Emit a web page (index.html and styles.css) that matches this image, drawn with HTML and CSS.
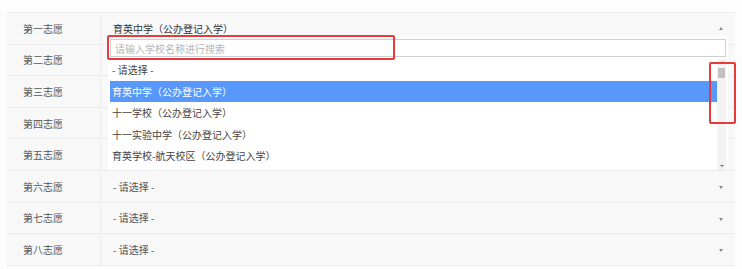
FILE: index.html
```html
<!DOCTYPE html>
<html lang="zh-CN">
<head>
    <meta charset="UTF-8">
    <title>志愿填报</title>
    <link rel="stylesheet" href="styles.css">
</head>
<body>
<div class="page">
    <div class="wishForm">
        <div class="wishRow">
            <div class="wishLabel">第一志愿</div>
            <div class="wishValue open">
                <span class="selected">育英中学（公办登记入学）</span>
                <span class="arrow up"></span>
                <div class="dropdown">
                    <div class="searchWrap">
                        <input type="text" class="searchField" placeholder="请输入学校名称进行搜索">
                    </div>
                    <div class="listWrap">
                        <ul class="options">
                            <li>- 请选择 -</li>
                            <li class="highlighted">育英中学（公办登记入学）</li>
                            <li>十一学校（公办登记入学）</li>
                            <li>十一实验中学（公办登记入学）</li>
                            <li>育英学校-航天校区（公办登记入学）</li>
                        </ul>
                        <div class="scrollbar">
                            <span class="scrollUp"></span>
                            <span class="thumb"></span>
                            <span class="scrollDown"></span>
                        </div>
                    </div>
                </div>
            </div>
        </div>
        <div class="wishRow">
            <div class="wishLabel">第二志愿</div>
            <div class="wishValue"></div>
        </div>
        <div class="wishRow">
            <div class="wishLabel">第三志愿</div>
            <div class="wishValue"></div>
        </div>
        <div class="wishRow">
            <div class="wishLabel">第四志愿</div>
            <div class="wishValue"></div>
        </div>
        <div class="wishRow">
            <div class="wishLabel">第五志愿</div>
            <div class="wishValue"></div>
        </div>
        <div class="wishRow">
            <div class="wishLabel">第六志愿</div>
            <div class="wishValue">
                <span class="selected muted">- 请选择 -</span>
                <span class="arrow"></span>
            </div>
        </div>
        <div class="wishRow">
            <div class="wishLabel">第七志愿</div>
            <div class="wishValue">
                <span class="selected muted">- 请选择 -</span>
                <span class="arrow"></span>
            </div>
        </div>
        <div class="wishRow">
            <div class="wishLabel">第八志愿</div>
            <div class="wishValue">
                <span class="selected muted">- 请选择 -</span>
                <span class="arrow"></span>
            </div>
        </div>
    </div>

    <!-- red marks drawn over the screenshot -->
    <div class="mark markSearch"></div>
    <div class="mark markScroll"></div>
</div>
</body>
</html>
```

FILE: styles.css
```css
body {
    margin: 0;
    padding: 0;
    background-color: #FDFDFD;
    font-family: "Noto Sans CJK SC", "Noto Sans", sans-serif;
    font-size: 10px;
    color: #444;
}

.page {
    position: relative;
    height: 269px;
    overflow: hidden;
    padding: 12px 7px 0 7px;
}

.wishForm {
    border-top: 1px solid #EBEBEB;
    background-color: #F8F8F9;
}

.wishRow {
    display: flex;
    height: 30.6px;
    border-bottom: 1px solid #ECECEC;
}

.wishLabel {
    width: 77px;
    padding-left: 16px;
    border-right: 1px solid #ECECEC;
    display: flex;
    align-items: center;
    color: #555;
}

.wishValue {
    position: relative;
    flex-grow: 1;
    display: flex;
    align-items: center;
    padding-left: 12px;
}

.selected {
    color: #333;
}

.selected.muted {
    color: #555;
}

.arrow {
    position: absolute;
    right: 12px;
    top: 15px;
    width: 0;
    height: 0;
    border-left: 2.5px solid transparent;
    border-right: 2.5px solid transparent;
    border-top: 3px solid #888;
}

.arrow.up {
    top: 14px;
    border-top: none;
    border-bottom: 3px solid #888;
}

.dropdown {
    position: absolute;
    left: 7px;
    right: 7px;
    top: 23px;
    z-index: 5;
    background-color: #FFF;
    padding: 3px 2px 0 2px;
}

.searchWrap {
    display: flex;
    margin-bottom: 2px;
}

.searchField {
    flex-grow: 1;
    height: 18px;
    box-sizing: border-box;
    margin: 0;
    padding: 0 4px;
    border: 1px solid #CFCFCF;
    border-radius: 0;
    font-family: "Noto Sans CJK SC", "Noto Sans", sans-serif;
    font-size: 10px;
    outline: none;
}

.searchField::placeholder {
    color: #B5B5B5;
}

.listWrap {
    display: flex;
    height: 111px;
}

.options {
    flex-grow: 1;
    list-style: none;
    margin: 0;
    padding: 0;
}

.options li {
    height: 21.6px;
    line-height: 21.6px;
    padding-left: 2px;
    color: #444;
    white-space: nowrap;
}

.options li.highlighted {
    background-color: #5897FB;
    color: #FFF;
}

.scrollbar {
    position: relative;
    width: 9px;
    background-color: #F3F3F3;
}

.scrollUp, .scrollDown {
    position: absolute;
    left: 2.5px;
    width: 0;
    height: 0;
    border-left: 2px solid transparent;
    border-right: 2px solid transparent;
}

.scrollUp {
    top: 2px;
    border-bottom: 2.5px solid #A3A3A3;
}

.scrollDown {
    bottom: 3px;
    border-top: 2.5px solid #707070;
}

.thumb {
    position: absolute;
    left: 1px;
    top: 9px;
    width: 7px;
    height: 10px;
    background-color: #C1C1C1;
}

.mark {
    position: absolute;
    z-index: 10;
    border: 2px solid #E8393B;
    border-radius: 2px;
    box-sizing: border-box;
}

.markSearch {
    left: 107px;
    top: 35px;
    width: 288px;
    height: 25px;
}

.markScroll {
    left: 709px;
    top: 62px;
    width: 27px;
    height: 62px;
}
```
